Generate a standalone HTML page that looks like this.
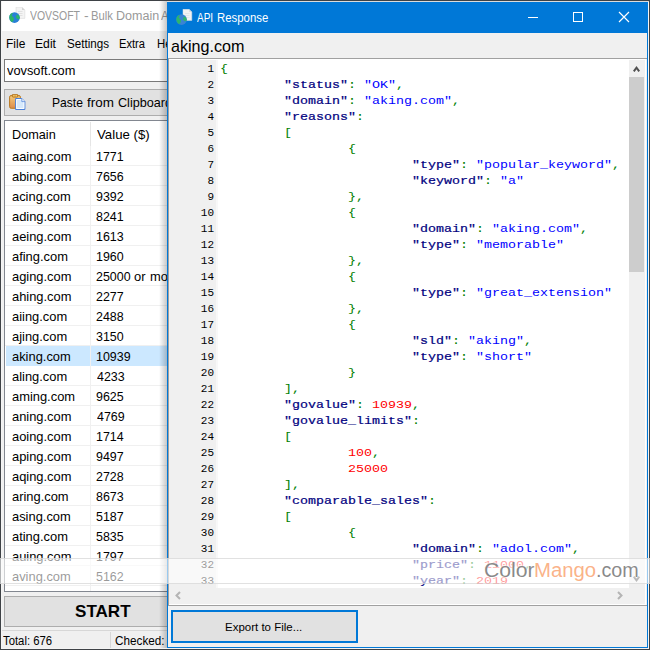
<!DOCTYPE html>
<html><head><meta charset="utf-8"><title>API Response</title>
<style>
html,body{margin:0;padding:0;}
body{width:650px;height:650px;overflow:hidden;position:relative;background:#f0f0f0;font-family:"Liberation Sans",sans-serif;font-size:13px;color:#000;}
.abs{position:absolute;}
.t{position:absolute;white-space:pre;transform-origin:0 0;display:block;}
#front{position:absolute;left:167px;top:2px;width:481px;height:646px;box-sizing:border-box;border:1px solid #0078d7;background:#f0f0f0;}
#nums{position:absolute;left:169px;top:61px;width:45px;margin:0;text-align:right;font-family:"Liberation Mono",monospace;font-size:11px;line-height:16px;color:#000;white-space:pre;}
#code{position:absolute;left:220px;top:60px;margin:0;font-family:"Liberation Mono",monospace;font-size:11.3px;line-height:16px;white-space:pre;color:#000;transform-origin:0 0;transform:scaleX(1.1799);}
.k{color:#000080;font-weight:normal;-webkit-text-stroke:0.2px #000080;}
.s{color:#0000ff;}
.p{color:#008000;-webkit-text-stroke:0.04px #008000;}
.n{color:#ff0000;}
</style></head><body>
<!-- back window -->
<div class="abs" style="left:0;top:0;width:650px;height:650px;background:#f0f0f0"></div>
<div class="abs" style="left:0;top:0;width:650px;height:31px;background:#fff"></div>
<div class="abs" style="left:0;top:0;width:650px;height:1px;background:#3c3c3c"></div>
<div class="abs" style="left:0;top:0;width:1px;height:650px;background:#7a7a7a"></div>
<svg class="abs" style="left:8px;top:7px" width="18" height="17" viewBox="0 0 18 17"><path d="M8 0.200h6l2.800 2.800v8.400h-8.800z" fill="#f4f4f4" stroke="#d4d4d4" stroke-width="0.5"/><path d="M14 0.200v2.800h2.800" fill="#d4d4d4" stroke="none"/><path d="M10 4.500h4.500M10 6.500h4.500M10 8.500h4.500" stroke="#d4d4d4" stroke-width="0.6"/><circle cx="6.500" cy="10.600" r="5.300" fill="#2a80d6"/><path d="M1.500 8.800c0.700-2 2.300-3.200 3.300-2.800c0.600 0.700-1.300 1.600-1 2.600s2.300 1.800 2.200 3.300s-1 2.900-2.400 3c-1.700-1-2.700-3.700-2.100-6.100z" fill="#2bb56a"/><path d="M9.300 7.400c1.300 0.300 2.400 1.800 2.500 3.600c-0.500 1.200-1.500 1.500-2.200 0.900s-1.800-0.900-1.600-2.100s0.600-1.800 1.300-2.400z" fill="#2bb56a"/></svg>
<span class="t" style="left:30.06px;top:10.42px;font-size:12.5px;line-height:12.5px;color:#999;transform:scaleX(0.8367);">VOVSOFT</span><span class="t" style="left:83.69px;top:10.42px;font-size:12.5px;line-height:12.5px;color:#999;transform:scaleX(1.1102);">-</span><span class="t" style="left:90.68px;top:10.42px;font-size:12.5px;line-height:12.5px;color:#999;transform:scaleX(0.9008);">Bulk</span><span class="t" style="left:115.97px;top:10.42px;font-size:12.5px;line-height:12.5px;color:#999;transform:scaleX(1.0036);">Domain</span><span class="t" style="left:161.48px;top:10.42px;font-size:12.5px;line-height:12.5px;color:#999;transform:scaleX(0.9200);">Appraisal</span>
<span class="t" style="left:6.32px;top:37.84px;font-size:12px;line-height:12px;color:#000;transform:scaleX(0.9989);">File</span><span class="t" style="left:35.10px;top:37.84px;font-size:12px;line-height:12px;color:#000;transform:scaleX(1.0149);">Edit</span><span class="t" style="left:66.98px;top:37.84px;font-size:12px;line-height:12px;color:#000;transform:scaleX(0.9697);">Settings</span><span class="t" style="left:119.49px;top:37.84px;font-size:12px;line-height:12px;color:#000;transform:scaleX(0.9284);">Extra</span><span class="t" style="left:156.67px;top:37.84px;font-size:12px;line-height:12px;color:#000;transform:scaleX(0.9500);">Help</span>
<div class="abs" style="left:4px;top:59px;width:400px;height:23px;box-sizing:border-box;border:1px solid #7a7a7a;background:#fff"></div>
<span class="t" style="left:7.06px;top:63.74px;font-size:13.3px;line-height:13.3px;color:#000;transform:scaleX(0.9636);">vovsoft.com</span>
<div class="abs" style="left:4px;top:89px;width:400px;height:27px;box-sizing:border-box;border:1px solid #adadad;background:#e1e1e1"></div>
<svg class="abs" style="left:9px;top:94px" width="17" height="17" viewBox="0 0 17 17"><defs><linearGradient id="cb" x1="0" y1="0" x2="0" y2="1"><stop offset="0" stop-color="#f3cb7c"/><stop offset="1" stop-color="#dd8c4c"/></linearGradient></defs><rect x="0.600" y="1.500" width="10.800" height="12.800" rx="1.600" fill="url(#cb)" stroke="#b9781f" stroke-width="1"/><rect x="3.200" y="0.400" width="5.600" height="2.700" rx="0.800" fill="#d9993a" stroke="#b06f17" stroke-width="0.8"/><rect x="4.300" y="1.200" width="1.200" height="1.200" fill="#fbe48a"/><rect x="6.600" y="1.200" width="1.200" height="1.200" fill="#fbe48a"/><path d="M6.600 4.500h6.200l3.100 3.100v7.900h-9.300z" fill="#d6e9fc" stroke="#4a80d8" stroke-width="1"/><path d="M7.600 5.500h4.800l2.500 2.500v6.500h-7.300z" fill="none" stroke="#fff" stroke-width="0.9"/><path d="M12.800 4.500v3.100h3.100" fill="#e8f2fe" stroke="#4a80d8" stroke-width="0.7"/></svg>
<span class="t" style="left:52.11px;top:95.74px;font-size:13.3px;line-height:13.3px;color:#000;transform:scaleX(0.9093);">Paste</span><span class="t" style="left:87.01px;top:95.74px;font-size:13.3px;line-height:13.3px;color:#000;transform:scaleX(1.0098);">from</span><span class="t" style="left:118.47px;top:95.74px;font-size:13.3px;line-height:13.3px;color:#000;transform:scaleX(0.9500);">Clipboard</span>
<div class="abs" style="left:4px;top:120px;width:400px;height:472px;box-sizing:border-box;border:1px solid #828790;background:#fff"></div>
<span class="t" style="left:11.56px;top:127.74px;font-size:13.3px;line-height:13.3px;color:#000;transform:scaleX(0.9547);">Domain</span><span class="t" style="left:96.85px;top:127.74px;font-size:13.3px;line-height:13.3px;color:#000;transform:scaleX(0.9943);">Value ($)</span>
<div class="abs" style="left:90px;top:122px;width:1px;height:24px;background:#e5e5e5"></div>
<div class="abs" style="left:5px;top:165px;width:400px;height:1px;background:#f0f0f0"></div>
<span class="t" style="left:12.06px;top:149.74px;font-size:13.3px;line-height:13.3px;color:#000;transform:scaleX(0.9693);">aaing.com</span><span class="t" style="left:95.96px;top:149.74px;font-size:13.3px;line-height:13.3px;color:#000;transform:scaleX(0.9345);">1771</span>
<div class="abs" style="left:5px;top:185px;width:400px;height:1px;background:#f0f0f0"></div>
<span class="t" style="left:12.06px;top:169.74px;font-size:13.3px;line-height:13.3px;color:#000;transform:scaleX(0.9693);">abing.com</span><span class="t" style="left:96.27px;top:169.74px;font-size:13.3px;line-height:13.3px;color:#000;transform:scaleX(0.9345);">7656</span>
<div class="abs" style="left:5px;top:205px;width:400px;height:1px;background:#f0f0f0"></div>
<span class="t" style="left:12.06px;top:189.74px;font-size:13.3px;line-height:13.3px;color:#000;transform:scaleX(0.9693);">acing.com</span><span class="t" style="left:96.33px;top:189.74px;font-size:13.3px;line-height:13.3px;color:#000;transform:scaleX(0.9345);">9392</span>
<div class="abs" style="left:5px;top:225px;width:400px;height:1px;background:#f0f0f0"></div>
<span class="t" style="left:12.06px;top:209.74px;font-size:13.3px;line-height:13.3px;color:#000;transform:scaleX(0.9693);">ading.com</span><span class="t" style="left:96.37px;top:209.74px;font-size:13.3px;line-height:13.3px;color:#000;transform:scaleX(0.9345);">8241</span>
<div class="abs" style="left:5px;top:245px;width:400px;height:1px;background:#f0f0f0"></div>
<span class="t" style="left:12.06px;top:229.74px;font-size:13.3px;line-height:13.3px;color:#000;transform:scaleX(0.9693);">aeing.com</span><span class="t" style="left:95.96px;top:229.74px;font-size:13.3px;line-height:13.3px;color:#000;transform:scaleX(0.9345);">1613</span>
<div class="abs" style="left:5px;top:265px;width:400px;height:1px;background:#f0f0f0"></div>
<span class="t" style="left:12.06px;top:249.74px;font-size:13.3px;line-height:13.3px;color:#000;transform:scaleX(0.9693);">afing.com</span><span class="t" style="left:95.96px;top:249.74px;font-size:13.3px;line-height:13.3px;color:#000;transform:scaleX(0.9345);">1960</span>
<div class="abs" style="left:5px;top:285px;width:400px;height:1px;background:#f0f0f0"></div>
<span class="t" style="left:12.06px;top:269.74px;font-size:13.3px;line-height:13.3px;color:#000;transform:scaleX(0.9693);">aging.com</span><span class="t" style="left:96.28px;top:269.74px;font-size:13.3px;line-height:13.3px;color:#000;transform:scaleX(0.9345);">25000</span><span class="t" style="left:134.26px;top:269.74px;font-size:13.3px;line-height:13.3px;color:#000;transform:scaleX(0.9693);">or</span><span class="t" style="left:150.45px;top:269.74px;font-size:13.3px;line-height:13.3px;color:#000;transform:scaleX(0.9693);">more</span>
<div class="abs" style="left:5px;top:305px;width:400px;height:1px;background:#f0f0f0"></div>
<span class="t" style="left:12.06px;top:289.74px;font-size:13.3px;line-height:13.3px;color:#000;transform:scaleX(0.9693);">ahing.com</span><span class="t" style="left:96.28px;top:289.74px;font-size:13.3px;line-height:13.3px;color:#000;transform:scaleX(0.9345);">2277</span>
<div class="abs" style="left:5px;top:325px;width:400px;height:1px;background:#f0f0f0"></div>
<span class="t" style="left:12.06px;top:309.74px;font-size:13.3px;line-height:13.3px;color:#000;transform:scaleX(0.9693);">aiing.com</span><span class="t" style="left:96.28px;top:309.74px;font-size:13.3px;line-height:13.3px;color:#000;transform:scaleX(0.9345);">2488</span>
<div class="abs" style="left:5px;top:345px;width:400px;height:1px;background:#f0f0f0"></div>
<span class="t" style="left:12.06px;top:329.74px;font-size:13.3px;line-height:13.3px;color:#000;transform:scaleX(0.9693);">ajing.com</span><span class="t" style="left:96.43px;top:329.74px;font-size:13.3px;line-height:13.3px;color:#000;transform:scaleX(0.9345);">3150</span>
<div class="abs" style="left:6px;top:346px;width:400px;height:20px;background:#cce8ff"></div>
<span class="t" style="left:12.06px;top:349.74px;font-size:13.3px;line-height:13.3px;color:#000;transform:scaleX(0.9693);">aking.com</span><span class="t" style="left:95.96px;top:349.74px;font-size:13.3px;line-height:13.3px;color:#000;transform:scaleX(0.9345);">10939</span>
<div class="abs" style="left:5px;top:385px;width:400px;height:1px;background:#f0f0f0"></div>
<span class="t" style="left:12.06px;top:369.74px;font-size:13.3px;line-height:13.3px;color:#000;transform:scaleX(0.9693);">aling.com</span><span class="t" style="left:96.63px;top:369.74px;font-size:13.3px;line-height:13.3px;color:#000;transform:scaleX(0.9345);">4233</span>
<div class="abs" style="left:5px;top:405px;width:400px;height:1px;background:#f0f0f0"></div>
<span class="t" style="left:12.06px;top:389.74px;font-size:13.3px;line-height:13.3px;color:#000;transform:scaleX(0.9693);">aming.com</span><span class="t" style="left:96.33px;top:389.74px;font-size:13.3px;line-height:13.3px;color:#000;transform:scaleX(0.9345);">9625</span>
<div class="abs" style="left:5px;top:425px;width:400px;height:1px;background:#f0f0f0"></div>
<span class="t" style="left:12.06px;top:409.74px;font-size:13.3px;line-height:13.3px;color:#000;transform:scaleX(0.9693);">aning.com</span><span class="t" style="left:96.63px;top:409.74px;font-size:13.3px;line-height:13.3px;color:#000;transform:scaleX(0.9345);">4769</span>
<div class="abs" style="left:5px;top:445px;width:400px;height:1px;background:#f0f0f0"></div>
<span class="t" style="left:12.06px;top:429.74px;font-size:13.3px;line-height:13.3px;color:#000;transform:scaleX(0.9693);">aoing.com</span><span class="t" style="left:95.96px;top:429.74px;font-size:13.3px;line-height:13.3px;color:#000;transform:scaleX(0.9345);">1714</span>
<div class="abs" style="left:5px;top:465px;width:400px;height:1px;background:#f0f0f0"></div>
<span class="t" style="left:12.06px;top:449.74px;font-size:13.3px;line-height:13.3px;color:#000;transform:scaleX(0.9693);">aping.com</span><span class="t" style="left:96.33px;top:449.74px;font-size:13.3px;line-height:13.3px;color:#000;transform:scaleX(0.9345);">9497</span>
<div class="abs" style="left:5px;top:485px;width:400px;height:1px;background:#f0f0f0"></div>
<span class="t" style="left:12.06px;top:469.74px;font-size:13.3px;line-height:13.3px;color:#000;transform:scaleX(0.9693);">aqing.com</span><span class="t" style="left:96.28px;top:469.74px;font-size:13.3px;line-height:13.3px;color:#000;transform:scaleX(0.9345);">2728</span>
<div class="abs" style="left:5px;top:505px;width:400px;height:1px;background:#f0f0f0"></div>
<span class="t" style="left:12.06px;top:489.74px;font-size:13.3px;line-height:13.3px;color:#000;transform:scaleX(0.9693);">aring.com</span><span class="t" style="left:96.37px;top:489.74px;font-size:13.3px;line-height:13.3px;color:#000;transform:scaleX(0.9345);">8673</span>
<div class="abs" style="left:5px;top:525px;width:400px;height:1px;background:#f0f0f0"></div>
<span class="t" style="left:12.06px;top:509.74px;font-size:13.3px;line-height:13.3px;color:#000;transform:scaleX(0.9693);">asing.com</span><span class="t" style="left:96.40px;top:509.74px;font-size:13.3px;line-height:13.3px;color:#000;transform:scaleX(0.9345);">5187</span>
<div class="abs" style="left:5px;top:545px;width:400px;height:1px;background:#f0f0f0"></div>
<span class="t" style="left:12.06px;top:529.74px;font-size:13.3px;line-height:13.3px;color:#000;transform:scaleX(0.9693);">ating.com</span><span class="t" style="left:96.40px;top:529.74px;font-size:13.3px;line-height:13.3px;color:#000;transform:scaleX(0.9345);">5835</span>
<div class="abs" style="left:5px;top:565px;width:400px;height:1px;background:#f0f0f0"></div>
<span class="t" style="left:12.06px;top:549.74px;font-size:13.3px;line-height:13.3px;color:#000;transform:scaleX(0.9693);">auing.com</span><span class="t" style="left:95.96px;top:549.74px;font-size:13.3px;line-height:13.3px;color:#000;transform:scaleX(0.9345);">1797</span>
<div class="abs" style="left:5px;top:585px;width:400px;height:1px;background:#f0f0f0"></div>
<span class="t" style="left:12.06px;top:569.74px;font-size:13.3px;line-height:13.3px;color:#000;transform:scaleX(0.9693);">aving.com</span><span class="t" style="left:96.40px;top:569.74px;font-size:13.3px;line-height:13.3px;color:#000;transform:scaleX(0.9345);">5162</span>

<div class="abs" style="left:90px;top:146px;width:1px;height:445px;background:#f0f0f0"></div>
<div class="abs" style="left:5px;top:586px;width:400px;height:5px;background:#fff"></div>
<div class="abs" style="left:90px;top:586px;width:1px;height:5px;background:#f0f0f0"></div>
<div class="abs" style="left:4px;top:591px;width:400px;height:1px;background:#828790"></div>
<div class="abs" style="left:0;top:592px;width:400px;height:58px;background:#f0f0f0"></div>
<div class="abs" style="left:0;top:0;width:1px;height:650px;background:#7a7a7a"></div>
<div class="abs" style="left:4px;top:596px;width:400px;height:31px;box-sizing:border-box;border:1px solid #adadad;background:#e1e1e1"></div>
<span class="t" style="left:74.62px;top:603.20px;font-size:16.3px;line-height:16.3px;color:#000;font-weight:bold;transform:scaleX(1.0476);">START</span>
<div class="abs" style="left:1px;top:630px;width:400px;height:1px;background:#d7d7d7"></div>
<div class="abs" style="left:110px;top:632px;width:1px;height:18px;background:#d7d7d7"></div>
<span class="t" style="left:3.15px;top:634.84px;font-size:12px;line-height:12px;color:#000;transform:scaleX(0.9444);">Total: 676</span><span class="t" style="left:115.11px;top:634.84px;font-size:12px;line-height:12px;color:#000;transform:scaleX(0.9774);">Checked: 26</span>
<!-- front window shadow -->
<div class="abs" style="left:159px;top:0;width:8px;height:650px;background:linear-gradient(to right,rgba(0,0,0,0),rgba(0,0,0,0.22))"></div>
<div id="front"></div>
<div class="abs" style="left:168px;top:3px;width:479px;height:30px;background:#0078d7"></div>
<svg class="abs" style="left:175px;top:9px" width="18" height="17" viewBox="0 0 18 17"><path d="M8 0.200h6l2.800 2.800v8.400h-8.800z" fill="#f3f3f3" stroke="#d9dde2" stroke-width="0.5"/><path d="M14 0.200v2.800h2.800" fill="#d9dde2" stroke="none"/><path d="M10 4.500h4.500M10 6.500h4.500M10 8.500h4.500" stroke="#d9dde2" stroke-width="0.6"/><circle cx="6.500" cy="10.600" r="5.300" fill="#3a84d2"/><path d="M1.500 8.800c0.700-2 2.300-3.200 3.300-2.800c0.600 0.700-1.300 1.600-1 2.600s2.300 1.800 2.200 3.300s-1 2.900-2.400 3c-1.700-1-2.700-3.700-2.100-6.100z" fill="#2db56c"/><path d="M9.300 7.400c1.300 0.300 2.400 1.800 2.500 3.600c-0.500 1.200-1.500 1.500-2.200 0.900s-1.800-0.900-1.600-2.100s0.600-1.800 1.300-2.400z" fill="#2db56c"/></svg>
<span class="t" style="left:197.38px;top:12.42px;font-size:12.5px;line-height:12.5px;color:#fff;transform:scaleX(0.8011);">API</span><span class="t" style="left:217.17px;top:12.42px;font-size:12.5px;line-height:12.5px;color:#fff;transform:scaleX(0.9102);">Response</span>
<svg class="abs" style="left:509px;top:3px" width="138" height="30" viewBox="0 0 138 30"><path d="M19 14.500h10" stroke="#fff" stroke-width="1"/><rect x="64.500" y="9.500" width="9" height="9" fill="none" stroke="#fff" stroke-width="1"/><path d="M110 9l10 10M120 9l-10 10" stroke="#fff" stroke-width="1.150"/></svg>
<span class="t" style="left:170.82px;top:37.61px;font-size:17px;line-height:17px;color:#000;transform:scaleX(0.9489);">aking.com</span>
<!-- editor -->
<div class="abs" style="left:168px;top:58px;width:479px;height:548px;background:#fff"></div>
<div class="abs" style="left:168px;top:58px;width:479px;height:1px;background:#a0a0a0"></div>
<div class="abs" style="left:168px;top:58px;width:1px;height:548px;background:#a0a0a0"></div>
<div class="abs" style="left:168px;top:605px;width:479px;height:1px;background:#a0a0a0"></div>
<div class="abs" style="left:646px;top:59px;width:1px;height:546px;background:#f0f0f0"></div>
<div class="abs" style="left:169px;top:60px;width:47px;height:528px;background:#f0f0f0"></div>
<div class="abs" style="left:216px;top:60px;width:2px;height:528px;background:#f8f8f8"></div>
<pre id="nums">1
2
3
4
5
6
7
8
9
10
11
12
13
14
15
16
17
18
19
20
21
22
23
24
25
26
27
28
29
30
31
32
33</pre>
<div class="abs" style="left:220px;top:60px;width:409px;height:528px;overflow:hidden"><pre id="code" style="left:0;top:1px"><span class="p">{</span>
        <b class="k">"status"</b><span class="p">:</span> <span class="s">"OK"</span><span class="p">,</span>
        <b class="k">"domain"</b><span class="p">:</span> <span class="s">"aking.com"</span><span class="p">,</span>
        <b class="k">"reasons"</b><span class="p">:</span>
        <span class="p">[</span>
                <span class="p">{</span>
                        <b class="k">"type"</b><span class="p">:</span> <span class="s">"popular_keyword"</span><span class="p">,</span>
                        <b class="k">"keyword"</b><span class="p">:</span> <span class="s">"a"</span>
                <span class="p">},</span>
                <span class="p">{</span>
                        <b class="k">"domain"</b><span class="p">:</span> <span class="s">"aking.com"</span><span class="p">,</span>
                        <b class="k">"type"</b><span class="p">:</span> <span class="s">"memorable"</span>
                <span class="p">},</span>
                <span class="p">{</span>
                        <b class="k">"type"</b><span class="p">:</span> <span class="s">"great_extension"</span>
                <span class="p">},</span>
                <span class="p">{</span>
                        <b class="k">"sld"</b><span class="p">:</span> <span class="s">"aking"</span><span class="p">,</span>
                        <b class="k">"type"</b><span class="p">:</span> <span class="s">"short"</span>
                <span class="p">}</span>
        <span class="p">],</span>
        <b class="k">"govalue"</b><span class="p">:</span> <span class="n">10939</span><span class="p">,</span>
        <b class="k">"govalue_limits"</b><span class="p">:</span>
        <span class="p">[</span>
                <span class="n">100</span><span class="p">,</span>
                <span class="n">25000</span>
        <span class="p">],</span>
        <b class="k">"comparable_sales"</b><span class="p">:</span>
        <span class="p">[</span>
                <span class="p">{</span>
                        <b class="k">"domain"</b><span class="p">:</span> <span class="s">"adol.com"</span><span class="p">,</span>
                        <b class="k">"price"</b><span class="p">:</span> <span class="n">11000</span><span class="p">,</span>
                        <b class="k">"year"</b><span class="p">:</span> <span class="n">2019</span></pre></div>
<!-- vscroll -->
<div class="abs" style="left:629px;top:60px;width:16px;height:544px;background:#f0f0f0"></div>
<div class="abs" style="left:629px;top:77px;width:15px;height:195px;background:#cdcdcd"></div>
<svg class="abs" style="left:629px;top:60px" width="16" height="17"><path d="M4.800 11.300L7.500 7.700L10.200 11.300" fill="none" stroke="#505050" stroke-width="2"/></svg>
<svg class="abs" style="left:629px;top:571px" width="16" height="17"><path d="M4.800 5.700L7.500 9.300L10.200 5.700" fill="none" stroke="#505050" stroke-width="2"/></svg>
<!-- hscroll -->
<div class="abs" style="left:169px;top:588px;width:460px;height:16px;background:#f0f0f0"></div>
<svg class="abs" style="left:169px;top:588px" width="17" height="16"><path d="M11 4l-3.500 3.500l3.500 3.500" fill="none" stroke="#b4b4b4" stroke-width="2"/></svg>
<svg class="abs" style="left:612px;top:588px" width="17" height="16"><path d="M6 4l3.500 3.500l-3.500 3.500" fill="none" stroke="#b4b4b4" stroke-width="2"/></svg>
<!-- export -->
<div class="abs" style="left:171px;top:610px;width:187px;height:33px;box-sizing:border-box;border:2px solid #0078d7;background:#e1e1e1"></div>
<span class="t" style="left:225.26px;top:621.61px;font-size:11.8px;line-height:11.8px;color:#000;transform:scaleX(0.9740);">Export to File...</span>
<!-- outer frame -->
<div class="abs" style="left:1px;top:1px;width:648px;height:648px;box-sizing:border-box;border:1px solid #f4f4f4;border-top:none"></div>
<div class="abs" style="left:167px;top:1px;width:482px;height:1px;background:#dcdcdc"></div>
<div class="abs" style="left:0;top:0;width:650px;height:650px;box-sizing:border-box;border:1px solid #3e4246"></div>
<!-- watermark band -->
<div class="abs" style="left:0;top:558px;width:650px;height:26px;background:rgba(255,255,255,0.6);box-sizing:border-box;border-top:1px solid rgba(205,205,205,0.6);border-bottom:1px solid rgba(205,205,205,0.6)"></div>
<span class="t" style="left:484.34px;top:560.79px;font-size:19.5px;line-height:19.5px;color:rgba(105,105,105,0.78);transform:scaleX(1.0857);text-shadow:0 0 2px #fff,0 0 3px #fff;">Color</span><span class="t" style="left:534.13px;top:560.79px;font-size:19.5px;line-height:19.5px;color:rgba(250,165,115,0.85);transform:scaleX(1.0417);text-shadow:0 0 2px #fff,0 0 3px #fff;">Mango</span><span class="t" style="left:596.20px;top:560.79px;font-size:19.5px;line-height:19.5px;color:rgba(105,105,105,0.78);transform:scaleX(1.0124);text-shadow:0 0 2px #fff,0 0 3px #fff;">.com</span>
</body></html>
